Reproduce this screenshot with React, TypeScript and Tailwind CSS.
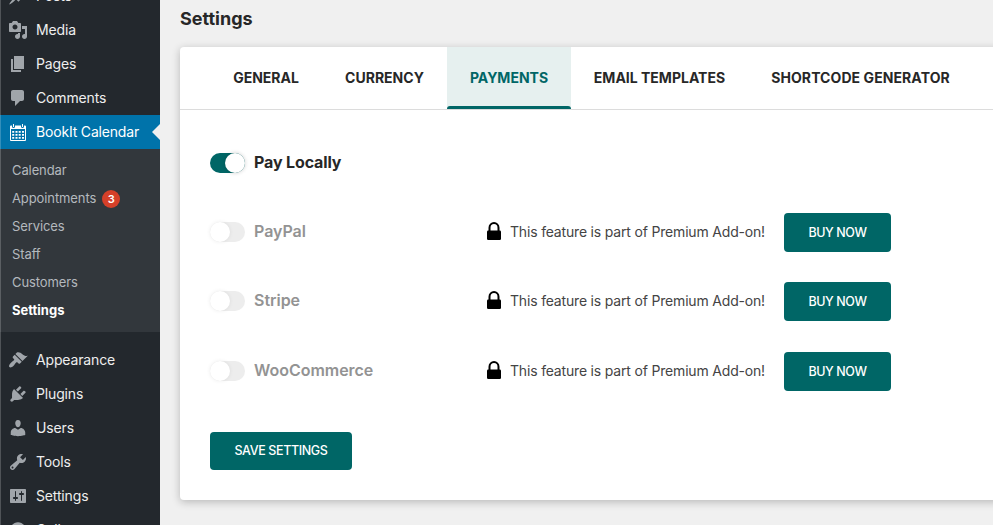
import React from "react";

const icons: Record<string, string> = {
  posts:
    "M10.44 3.02l1.82-1.82 6.36 6.35-1.83 1.82c-1.05-.68-2.48-.57-3.41.36l-.75.75c-.92.93-1.04 2.35-.35 3.41l-1.83 1.82-2.41-2.41-2.8 2.79c-.42.42-3.38 2.71-3.8 2.29s1.86-3.39 2.28-3.81l2.79-2.79L4.1 9.36l1.83-1.82c1.05.69 2.48.57 3.4-.36l.75-.75c.93-.92 1.05-2.35.36-3.41z",
  media:
    "M13 11V4c0-.55-.45-1-1-1h-1.67L9 1H5L3.67 3H2c-.55 0-1 .45-1 1v7c0 .55.45 1 1 1h10c.55 0 1-.45 1-1zM7 4.5c1.38 0 2.5 1.12 2.5 2.5S8.38 9.5 7 9.5 4.5 8.38 4.5 7 5.62 4.5 7 4.5zM14 6h5v10.5c0 1.38-1.12 2.5-2.5 2.5S14 17.88 14 16.5s1.12-2.5 2.5-2.5c.17 0 .34.02.5.05V9h-3V6zm-4 8.05V13h2v3.5c0 1.38-1.12 2.5-2.5 2.5S7 17.88 7 16.5 8.12 14 9.5 14c.17 0 .34.02.5.05z",
  pages: "M6 15V2h10v13H6zm-1 1h8v2H3V5h2v11z",
  comments:
    "M5 2h9c1.1 0 2 .9 2 2v7c0 1.1-.9 2-2 2h-2l-5 5v-5H5c-1.1 0-2-.9-2-2V4c0-1.1.9-2 2-2z",
  appearance:
    "M14.48 11.06L7.41 3.99l1.5-1.5c.5-.56 2.3-.47 3.51.32 1.21.8 1.43 1.28 2.91 2.1 1.18.64 2.45 1.26 4.45.85zm-.71.71L6.7 4.7 4.93 6.47c-.39.39-.39 1.02 0 1.41l1.06 1.06c.39.39.39 1.03 0 1.42-.6.6-1.43 1.11-2.21 1.69-.35.26-.7.53-1.01.84C1.43 14.23.4 16.08 1.4 17.07c.99 1 2.84-.03 4.18-1.36.31-.31.58-.66.85-1.02.57-.78 1.08-1.61 1.69-2.21.39-.39 1.02-.39 1.41 0l1.06 1.06c.39.39 1.02.39 1.41 0z",
  plugins:
    "M13.11 4.36L9.87 7.6 8 5.73l3.24-3.24c.35-.34 1.05-.2 1.56.32.52.51.66 1.21.31 1.55zm-8 1.77l.91-1.12 9.01 9.01-1.19.84c-.71.71-2.63 1.16-3.82 1.16H6.14L4.9 17.26c-.59.59-1.54.59-2.12 0-.59-.58-.59-1.53 0-2.12l1.24-1.24v-3.88c0-1.13.4-3.19 1.09-3.89zm7.26 3.97l3.24-3.24c.34-.35 1.04-.21 1.55.31.52.51.66 1.21.31 1.55l-3.24 3.25z",
  users:
    "M10 9.25c-2.27 0-2.73-3.44-2.73-3.44C7 4.02 7.82 2 9.97 2c2.16 0 2.98 2.02 2.71 3.81 0 0-.41 3.44-2.68 3.44zm0 2.57L12.72 10c2.39 0 4.52 2.33 4.52 4.53v2.49s-3.65 1.13-7.24 1.13c-3.65 0-7.24-1.13-7.24-1.13v-2.49c0-2.25 1.94-4.48 4.47-4.48z",
  tools:
    "M16.68 9.77c-1.34 1.34-3.3 1.67-4.95.99l-5.41 6.52c-.99.99-2.59.99-3.58 0s-.99-2.59 0-3.57l6.52-5.42c-.68-1.65-.35-3.61.99-4.95 1.28-1.28 3.12-1.62 4.72-1.06l-2.89 2.89 2.82 2.82 2.86-2.87c.53 1.58.18 3.39-1.08 4.65zM3.81 16.21c.4.39 1.04.39 1.43 0 .4-.4.4-1.04 0-1.43-.39-.4-1.03-.4-1.43 0-.39.39-.39 1.03 0 1.43z",
  settings:
    "M18 16V4c0-.55-.45-1-1-1H3c-.55 0-1 .45-1 1v12c0 .55.45 1 1 1h14c.55 0 1-.45 1-1zM8 11h1c.55 0 1 .45 1 1s-.45 1-1 1H8v1.5c0 .28-.22.5-.5.5s-.5-.22-.5-.5V13H6c-.55 0-1-.45-1-1s.45-1 1-1h1V5.5c0-.28.22-.5.5-.5s.5.22.5.5V11zm5-2h-1c-.55 0-1-.45-1-1s.45-1 1-1h1V5.5c0-.28.22-.5.5-.5s.5.22.5.5V7h1c.55 0 1 .45 1 1s-.45 1-1 1h-1v5.5c0 .28-.22.5-.5.5s-.5-.22-.5-.5V9z",
  collapse:
    "M10 2.16c4.33 0 7.84 3.51 7.84 7.84s-3.51 7.84-7.84 7.84S2.16 14.33 2.16 10 5.71 2.16 10 2.16zm2 11.72V6.12L6.18 9.97z",
};

function MenuItem({ icon, label }: { icon: string; label: string }) {
  return (
    <a className="flex h-[34px] shrink-0 items-center pl-2">
      <svg viewBox="0 0 20 20" className="size-5 shrink-0 fill-[#a0a5aa]">
        <path fillRule="evenodd" d={icons[icon]} />
      </svg>
      <span className="ml-2 text-sm leading-[18px] tracking-[-0.15px] whitespace-nowrap text-[#eee]">{label}</span>
    </a>
  );
}

function CalendarIcon() {
  return (
    <svg viewBox="0 0 18 18" className="size-[18px] shrink-0">
      <path
        fill="#fff"
        fillRule="evenodd"
        d="M2 2.500h1v1a1.500 1.500 0 0 0 3 0v-1h6v1a1.500 1.500 0 0 0 3 0v-1h1a1 1 0 0 1 1 1V17a1 1 0 0 1-1 1H2a1 1 0 0 1-1-1V3.500a1 1 0 0 1 1-1zM2 6v11h14V6z"
      />
      <path fill="#fff" d="M4 1h1v3H4zM13 1h1v3h-1z" />
      <path
        fill="#fff"
        d="M6.500 8h2v1.700h-2zM9.700 8h2v1.700h-2zM13 8h2v1.700h-2zM3.200 11h2v1.700h-2zM6.500 11h2v1.700h-2zM9.700 11h2v1.700h-2zM13 11h2v1.700h-2zM3.200 14h2v1.700h-2zM6.500 14h2v1.700h-2zM9.700 14h2v1.700h-2zM13 14h2v1.700h-2zM3.200 8h2v1.700h-2z"
      />
    </svg>
  );
}

function Sidebar() {
  const sub = ["Calendar", "Appointments", "Services", "Staff", "Customers", "Settings"];
  return (
    <aside className="relative h-full w-40 shrink-0 overflow-hidden bg-[#23282d]">
      <nav className="-mt-[21px] flex flex-col">
        <MenuItem icon="posts" label="Posts" />
        <MenuItem icon="media" label="Media" />
        <MenuItem icon="pages" label="Pages" />
        <MenuItem icon="comments" label="Comments" />
        <a className="flex h-[34px] items-center justify-between bg-[#0073aa] pl-[9px]">
          <span className="flex items-center">
            <CalendarIcon />
            <span className="ml-[9px] text-sm leading-[18px] tracking-[-0.18px] whitespace-nowrap text-white">
              BookIt Calendar
            </span>
          </span>
          <span className="size-0 border-y-8 border-r-8 border-y-transparent border-r-[#f0f0f0]" />
        </a>
        <div className="flex h-[183px] flex-col bg-[#32373c] pt-2">
          {sub.map((s) => (
            <a
              key={s}
              className={
                s === "Settings"
                  ? "flex h-7 items-center pl-3 text-[13px] font-bold text-white"
                  : "flex h-7 items-center pl-3 text-[13px] tracking-[-0.1px] text-[#b4b9be]"
              }
            >
              {s}
              {s === "Appointments" && (
                <span className="ml-1.5 flex size-[18px] items-center justify-center rounded-full bg-[#d54029] text-[11px] font-semibold text-white">
                  3
                </span>
              )}
            </a>
          ))}
        </div>
        <div className="h-[11px]" />
        <MenuItem icon="appearance" label="Appearance" />
        <MenuItem icon="plugins" label="Plugins" />
        <MenuItem icon="users" label="Users" />
        <MenuItem icon="tools" label="Tools" />
        <MenuItem icon="settings" label="Settings" />
        <MenuItem icon="collapse" label="Collapse menu" />
      </nav>
      <div className="absolute inset-y-0 left-0 w-px bg-white/20" />
    </aside>
  );
}

function Toggle({ on = false }: { on?: boolean }) {
  return on ? (
    <span className="flex h-5 w-[35px] shrink-0 justify-end rounded-full bg-[#006666]">
      <span className="size-5 rounded-full bg-white shadow-[0_0_4px_rgba(0,0,0,0.2)]" />
    </span>
  ) : (
    <span className="flex h-5 w-[35px] shrink-0 rounded-full bg-[#ededed]">
      <span className="size-5 rounded-full bg-white shadow-[0_0_4px_rgba(0,0,0,0.08)]" />
    </span>
  );
}

function LockIcon() {
  return (
    <svg viewBox="0 0 14 18" className="mb-[3px] h-[18px] w-3.5 shrink-0">
      <path d="M2.500 10V5.700a4.500 4.700 0 0 1 9 0V10" fill="none" stroke="#000" strokeWidth="2" />
      <rect x="0" y="8.500" width="14" height="9.500" rx="1.200" fill="#000" />
    </svg>
  );
}

function PremiumRow({ name, className }: { name: string; className: string }) {
  return (
    <div className={`flex h-[39px] items-center ${className}`}>
      <div className="flex w-[277px] items-center pb-px">
        <Toggle />
        <span className="mb-0.5 ml-[9px] text-base leading-5 font-semibold tracking-[-0.03px] text-[#939393]">
          {name}
        </span>
      </div>
      <LockIcon />
      <span className="mb-0.5 ml-[9px] w-[274px] text-sm tracking-[-0.18px] whitespace-nowrap text-[#444]">
        This feature is part of Premium Add-on!
      </span>
      <button className="h-[39px] w-[107px] rounded-[4px] bg-[#006666] pt-0.5 text-[12.5px] font-[450] tracking-[-0.4px] text-white">
        BUY NOW
      </button>
    </div>
  );
}

function Tabs() {
  const tab = "flex h-[62px] shrink-0 items-center justify-center text-sm font-bold whitespace-nowrap";
  return (
    <div className="flex h-[63px] border-b border-[#dcdcdc] pl-[30px] text-[#272727]">
      <div className={`${tab} w-28`}>GENERAL</div>
      <div className={`${tab} w-[125px]`}>CURRENCY</div>
      <div className="flex h-[62px] w-[124px] shrink-0 flex-col bg-[#e6f0ef] text-[#006666]">
        <div className="flex h-[59px] items-center justify-center pt-[3px] text-sm font-bold">PAYMENTS</div>
        <div className="h-[3px] rounded-t-[3px] bg-[#006666]" />
      </div>
      <div className={`${tab} w-[177px]`}>EMAIL TEMPLATES</div>
      <div className={`${tab} w-[225px] tracking-[0.08px]`}>SHORTCODE GENERATOR</div>
    </div>
  );
}

export default function App() {
  return (
    <div className="flex h-[525px] w-[993px] overflow-hidden bg-[#f0f0f0] font-['Inter','Liberation_Sans',sans-serif]">
      <Sidebar />
      <main className="flex min-w-0 flex-1 flex-col overflow-hidden pl-5">
        <h1 className="flex h-[47px] shrink-0 items-start pt-[7px] text-lg leading-6 font-bold text-[#272727]">
          Settings
        </h1>
        <section className="h-[453px] w-[833px] shrink-0 rounded-[4px] bg-white shadow-[0_2px_8px_rgba(0,0,0,0.24)]">
          <Tabs />
          <div className="flex flex-col pl-[30px]">
            <div className="mt-[43px] flex h-5 items-center">
              <Toggle on />
              <span className="mb-0.5 ml-[9px] text-base leading-5 font-bold tracking-[-0.13px] text-[#272727]">
                Pay Locally
              </span>
            </div>
            <PremiumRow name="PayPal" className="mt-10" />
            <PremiumRow name="Stripe" className="mt-[30px]" />
            <PremiumRow name="WooCommerce" className="mt-[31px]" />
            <button className="mt-[41px] h-[38px] w-[142px] rounded-[4px] bg-[#006666] text-[12.5px] font-[450] tracking-[-0.37px] text-white">
              SAVE SETTINGS
            </button>
          </div>
        </section>
      </main>
    </div>
  );
}
